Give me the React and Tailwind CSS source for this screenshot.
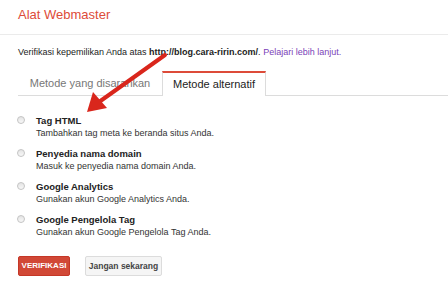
import React from "react";

const methods = [
  { title: "Tag HTML", desc: "Tambahkan tag meta ke beranda situs Anda." },
  { title: "Penyedia nama domain", desc: "Masuk ke penyedia nama domain Anda." },
  { title: "Google Analytics", desc: "Gunakan akun Google Analytics Anda." },
  { title: "Google Pengelola Tag", desc: "Gunakan akun Google Pengelola Tag Anda." },
];

function Radio() {
  return (
    <span className="mt-[2px] inline-block h-[8px] w-[8px] shrink-0 rounded-full border border-[#c4c4c4] bg-gradient-to-b from-[#e4e4e4] to-[#f8f8f8]" />
  );
}

function App() {
  return (
    <div className="relative h-[296px] w-[448px] overflow-hidden bg-white font-['Liberation_Sans',Arial,sans-serif] text-[#222]">
      <div className="h-[35px] border-b border-[#ebebeb] pl-[18px] pt-[7px] text-[13px] leading-[16px] text-[#dd4b39]">
        Alat Webmaster
      </div>

      <div className="pl-[18px] pt-[11px] text-[9px] leading-[12px]">
        Verifikasi kepemilikan Anda atas <b>http://blog.cara-ririn.com/</b>.{" "}
        <span className="text-[#7a3fb8]">Pelajari lebih lanjut.</span>
      </div>

      <div className="ml-[18px] mt-[13px] flex h-[25px] items-end border-b border-[#dcdcdc] text-[11px]">
        <div className="flex h-[24px] w-[144px] items-center justify-center text-[#777]">Metode yang disarankan</div>
        <div className="mb-[-1px] flex h-[25px] w-[104px] items-center justify-center border-x border-t-2 border-x-[#dcdcdc] border-t-[#dd4b39] bg-white text-[#222]">
          Metode alternatif
        </div>
      </div>

      <div className="flex flex-col gap-[7px] pl-[17px] pt-[18px] text-[9px]">
        {methods.map((m) => (
          <div key={m.title} className="flex gap-[11px]">
            <Radio />
            <div className="leading-[13px]">
              <div className="text-[9.5px] font-bold">{m.title}</div>
              <div className="text-[#333]">{m.desc}</div>
            </div>
          </div>
        ))}
      </div>

      <div className="flex gap-[15px] pl-[18px] pt-[17px]">
        <button className="h-[20px] w-[52px] rounded-[2px] border border-[#c53727] bg-[#d14836] text-[8px] font-bold text-white">
          VERIFIKASI
        </button>
        <button className="h-[20px] w-[77px] rounded-[2px] border border-[#dcdcdc] bg-[#f5f5f5] text-[8.5px] font-bold text-[#444]">
          Jangan sekarang
        </button>
      </div>

      <svg className="absolute left-0 top-0" width="448" height="296" viewBox="0 0 448 296">
        <line x1="165" y1="55" x2="99" y2="102" stroke="#d9261c" strokeWidth="4" strokeLinecap="round" />
        <polygon points="87,112 93,92 107,108" fill="#d9261c" />
      </svg>
    </div>
  );
}

export default App;
